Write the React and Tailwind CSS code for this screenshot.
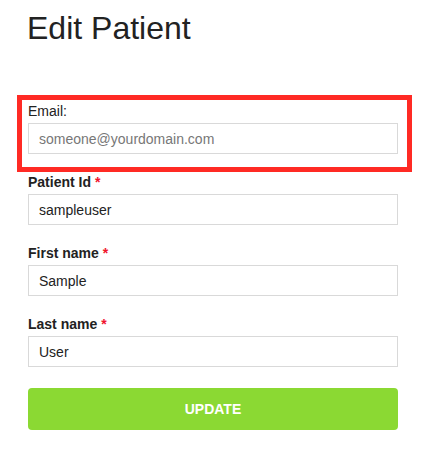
import { useState } from 'react';

const FIELDS = [
  { id: 'patientId', label: 'Patient Id', value: 'sampleuser' },
  { id: 'firstName', label: 'First name', value: 'Sample' },
  { id: 'lastName', label: 'Last name', value: 'User' },
];

export default function App() {
  const [email, setEmail] = useState('');
  const [values, setValues] = useState(() =>
    Object.fromEntries(FIELDS.map(f => [f.id, f.value]))
  );

  const inputClass =
    'block w-[370px] h-[31px] px-[10px] bg-white border border-[#d9d9d9] text-[14px] text-[#222] placeholder-[#777] outline-none';

  return (
    <div className="min-h-[460px] bg-white text-[#222] font-['Liberation_Sans',Arial,sans-serif] pl-[28px] pt-[10px]">
      <h1 className="text-[32px] leading-[37px] font-normal -ml-[1px]">Edit Patient</h1>

      <form className="mt-[48px] flex flex-col" onSubmit={e => e.preventDefault()}>
        {/* highlighted email field */}
        <div className="w-[395px] -ml-[11px] border-[5px] border-[#ff2a24] pl-[6px] pt-[3px] pb-[13px]">
          <label className="block text-[14px] leading-[17px] mb-[3px]">Email:</label>
          <input
            type="email"
            placeholder="someone@yourdomain.com"
            value={email}
            onChange={e => setEmail(e.target.value)}
            className={inputClass}
          />
        </div>

        <div className="flex flex-col gap-[20px] mt-[2px]">
          {FIELDS.map(f => (
            <div key={f.id}>
              <label className="block text-[14px] leading-[17px] font-bold mb-[3px]">
                {f.label} <span className="text-[#f0142d]">*</span>
              </label>
              <input
                type="text"
                value={values[f.id]}
                onChange={e => setValues(v => ({ ...v, [f.id]: e.target.value }))}
                className={inputClass}
              />
            </div>
          ))}
        </div>

        <button
          type="submit"
          className="mt-[21px] w-[370px] h-[42px] rounded-[4px] bg-[#8bd933] text-white text-[14px] font-bold"
        >
          UPDATE
        </button>
      </form>
    </div>
  );
}
